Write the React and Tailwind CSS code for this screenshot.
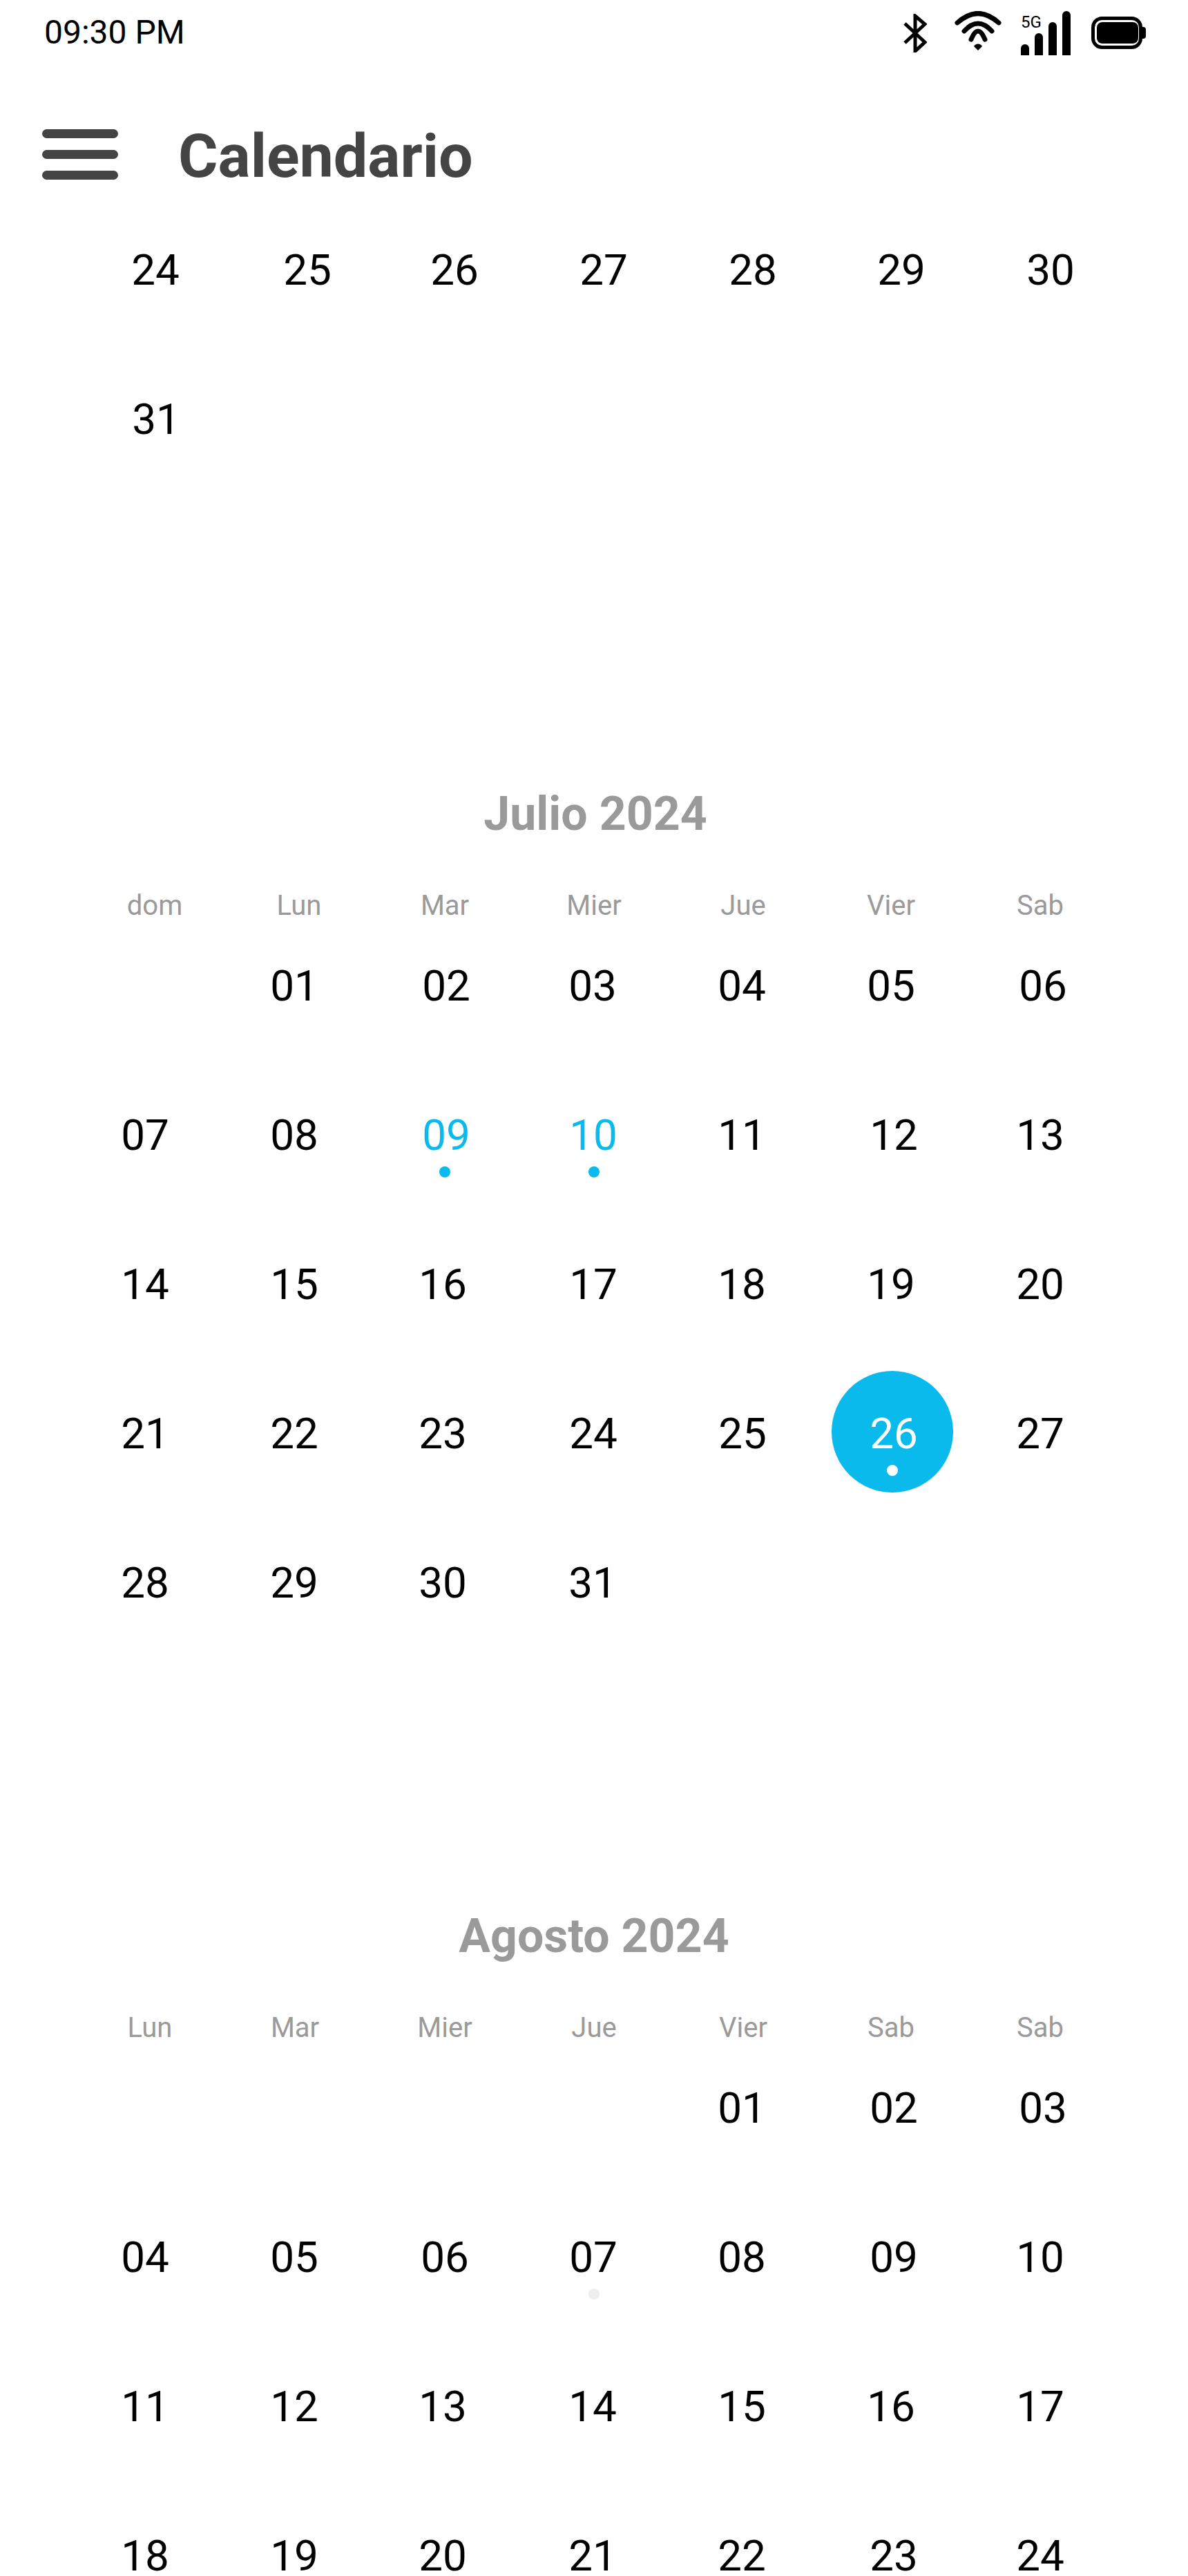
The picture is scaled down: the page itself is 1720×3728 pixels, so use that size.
import React from "react";

const FONT = "font-['Roboto',sans-serif]";

// The day labels in the reference don't sit exactly on the column centers
const RIGHT_4 = "translate-x-[4px]";
const RIGHT_3 = "translate-x-[3px]";
const RIGHT_2 = "translate-x-[2px]";
const RIGHT_1 = "translate-x-[1px]";
const LEFT_1 = "-translate-x-[1px]";
const LEFT_2 = "-translate-x-[2px]";
const RIGHT_5 = "translate-x-[5px]";
const RIGHT_12 = "translate-x-[12px]";

const JUNE_TAIL = [
  ["24", "25", "26", "27", "28", "29", "30"],
  ["31", "", "", "", "", "", ""],
];
const JUNE_NUDGE = { 24: LEFT_1, 25: RIGHT_3, 29: LEFT_1, 30: LEFT_1 };

const JULY = [
  ["", "01", "02", "03", "04", "05", "06"],
  ["07", "08", "09", "10", "11", "12", "13"],
  ["14", "15", "16", "17", "18", "19", "20"],
  ["21", "22", "23", "24", "25", "26", "27"],
  ["28", "29", "30", "31", "", "", ""],
];
const JULY_NUDGE = {
  "02": RIGHT_4,
  "06": RIGHT_4,
  "09": RIGHT_4,
  10: RIGHT_1,
  12: RIGHT_4,
  16: LEFT_1,
  17: RIGHT_1,
  23: LEFT_1,
  24: RIGHT_1,
  25: RIGHT_1,
  26: RIGHT_4,
  30: LEFT_1,
};

const AUGUST = [
  ["", "", "", "", "01", "02", "03"],
  ["04", "05", "06", "07", "08", "09", "10"],
  ["11", "12", "13", "14", "15", "16", "17"],
  ["18", "19", "20", "21", "22", "23", "24"],
];
const AUGUST_NUDGE = {
  "02": RIGHT_4,
  "03": RIGHT_4,
  "06": RIGHT_2,
  "07": RIGHT_1,
  "09": RIGHT_4,
  13: LEFT_1,
  20: LEFT_1,
  23: RIGHT_4,
};

const DayCell = ({ label, mark, nudge = "" }) => (
  <div className="relative h-[216px] flex items-center justify-center">
    {mark === "selected" && (
      <div className="absolute top-[17px] left-[22px] w-[176px] h-[176px] rounded-full bg-[#0abaec]" />
    )}
    <span
      className={`relative text-[62px] leading-none ${nudge} ${
        mark === "selected"
          ? "text-white"
          : mark === "dot"
            ? "text-[#0abaec]"
            : "text-black"
      }`}
    >
      {label}
    </span>
    {mark === "dot" && (
      <div className="absolute top-[153px] left-[102px] w-4 h-4 rounded-full bg-[#0abaec]" />
    )}
    {mark === "selected" && (
      <div className="absolute top-[153px] left-[102px] w-4 h-4 rounded-full bg-white" />
    )}
    {mark === "off" && (
      <div className="absolute top-[153px] left-[102px] w-4 h-4 rounded-full bg-[#eeeeee]" />
    )}
  </div>
);

const Weeks = ({ weeks, marks = {}, nudges = {} }) => (
  <div className="pl-[102px] w-[1614px]">
    {weeks.map((week, r) => (
      <div key={r} className="grid grid-cols-7">
        {week.map((d, c) => (
          <DayCell key={c} label={d} mark={marks[d]} nudge={nudges[d]} />
        ))}
      </div>
    ))}
  </div>
);

const Month = ({ title, titleClass = "", weekdays, weeks, marks, nudges, className }) => (
  <section className={className}>
    <h2
      className={`h-[100px] flex items-center justify-center text-[68px] font-bold leading-none text-[#9a9a9a] ${titleClass}`}
    >
      {title}
    </h2>
    <div className="grid grid-cols-7 h-[72px] mt-[47px] -mb-[28px] pl-[104px] w-[1616px]">
      {weekdays.map(([w, cls], i) => (
        <div
          key={i}
          className={`flex items-center justify-center text-[40px] text-[#9a9a9a] ${cls}`}
        >
          {w}
        </div>
      ))}
    </div>
    <Weeks weeks={weeks} marks={marks} nudges={nudges} />
  </section>
);

const StatusBar = () => (
  <div className="h-[96px] flex items-start pl-[64px]">
    <span className="mt-[23px] text-[48px] leading-[48px] text-black">
      09:30 PM
    </span>
    <svg className="ml-auto mt-[20px] w-[34px] h-[56px]" viewBox="0 0 34 56">
      <polyline
        points="2,14 31,41 17,54 17,3 31,15 2,42"
        fill="none"
        stroke="black"
        strokeWidth="5"
      />
    </svg>
    <svg className="ml-[40px] mt-[16px] w-[68px] h-[57px]" viewBox="0 0 68 57">
      <g fill="none" stroke="black" strokeWidth="7" strokeLinecap="round">
        <path d="M4 17Q34 -10 64 17" />
        <path d="M14 29Q34 7 54 29" />
        <path d="M24 41Q34 17 44 41" />
      </g>
      <path d="M34 57L28 51A7 7 0 0 1 40 51Z" fill="black" />
    </svg>
    <div className="relative ml-[28px] mt-[16px] w-[72px] h-[64px] flex items-end gap-2">
      <span className="absolute left-0 top-[4px] text-[24px] leading-[24px] text-black">
        5G
      </span>
      <div className="w-3 h-4 rounded-t-full bg-black" />
      <div className="w-3 h-8 rounded-t-full bg-black" />
      <div className="w-3 h-12 rounded-t-full bg-black" />
      <div className="w-3 h-16 rounded-t-full bg-black" />
    </div>
    <svg
      className="ml-[30px] mr-[61px] mt-[24px] w-[79px] h-[47px]"
      viewBox="0 0 79 47"
    >
      <rect x="2.5" y="2.5" width="69" height="42" rx="13" fill="none" stroke="black" strokeWidth="5" />
      <rect x="8" y="8" width="60" height="31" rx="8" fill="black" />
      <path d="M74 15h1a4 4 0 0 1 4 4v9a4 4 0 0 1 -4 4h-1z" fill="black" />
    </svg>
  </div>
);

const TopBar = () => (
  <div className="h-[186px] flex items-start pl-[61px]">
    <div className="mt-[91px] w-[110px] flex flex-col gap-[17px]">
      <div className="h-[13px] rounded-full bg-[#444444]" />
      <div className="h-[13px] rounded-full bg-[#444444]" />
      <div className="h-[13px] rounded-full bg-[#444444]" />
    </div>
    <h1 className="ml-[87px] mt-[86px] text-[88px] leading-[88px] font-bold text-[#444444]">
      Calendario
    </h1>
  </div>
);

export default function App() {
  return (
    <div className={`w-[1720px] h-[3728px] overflow-hidden bg-white ${FONT}`}>
      <StatusBar />
      <TopBar />
      <div className="ml-[16px] mt-px">
        <Weeks weeks={JUNE_TAIL} nudges={JUNE_NUDGE} />
      </div>
      <Month
        className="mt-[413px]"
        title="Julio 2024"
        titleClass="pl-[4px]"
        weekdays={[
          ["dom", RIGHT_12],
          ["Lun", RIGHT_5],
          ["Mar", ""],
          ["Mier", ""],
          ["Jue", ""],
          ["Vier", LEFT_2],
          ["Sab", LEFT_2],
        ]}
        weeks={JULY}
        marks={{ "09": "dot", 10: "dot", 26: "selected" }}
        nudges={JULY_NUDGE}
      />
      <Month
        className="mt-[353px]"
        title="Agosto 2024"
        weekdays={[
          ["Lun", RIGHT_5],
          ["Mar", LEFT_1],
          ["Mier", ""],
          ["Jue", ""],
          ["Vier", ""],
          ["Sab", LEFT_2],
          ["Sab", LEFT_2],
        ]}
        weeks={AUGUST}
        marks={{ "07": "off" }}
        nudges={AUGUST_NUDGE}
      />
    </div>
  );
}
